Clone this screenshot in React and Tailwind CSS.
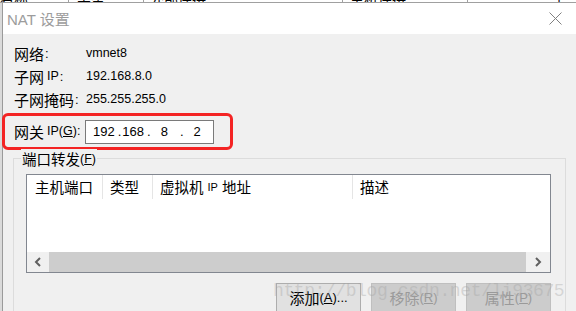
const cjk = "font-['Noto_Sans_CJK_SC',sans-serif]";

function Label({ zh, en }) {
  return (
    <span className="flex items-center">
      <span className={`${cjk} text-[15px] leading-none`}>{zh}</span>
      {en && <span className="text-[12.5px] leading-none ml-[3px]">{en}</span>}
      <span className="text-[13px] leading-none ml-[1px]">:</span>
    </span>
  );
}

function InfoRow({ zh, en, value, h }) {
  return (
    <div className={`flex items-center ${h} pl-[11px]`}>
      <div className="w-[72px]">
        <Label zh={zh} en={en} />
      </div>
      <span className="text-[12.5px] leading-none">{value}</span>
    </div>
  );
}

function Chevron({ dir }) {
  return (
    <svg width="8" height="10" viewBox="0 0 8 10">
      <polyline
        points={dir === "left" ? "6,1 2,5 6,9" : "2,1 6,5 2,9"}
        fill="none"
        stroke="#606060"
        strokeWidth="2"
      />
    </svg>
  );
}

function Button({ zh, hot, dots, disabled }) {
  return (
    <div
      className={`w-[85px] h-[29px] flex items-center justify-center border ${
        disabled ? "bg-[#cccccc] border-[#bfbfbf] text-[#9a9a9a]" : "bg-[#e1e1e1] border-[#adadad] text-black"
      }`}
    >
      <span className={`${cjk} text-[15px] leading-none`}>{zh}</span>
      <span className="text-[13px] leading-none">
        (<span className="underline">{hot}</span>){dots}
      </span>
    </div>
  );
}

export default function App() {
  return (
    <div className="w-[576px] h-[311px] overflow-hidden bg-[#f0f0f0] relative font-['Liberation_Sans','Noto_Sans_CJK_SC',sans-serif] text-black">
      {/* window behind the dialog, only its bottom edge shows */}
      <div className="h-[3px] relative overflow-hidden bg-white border-b border-[#a0a0a0]">
        <span className={`${cjk} absolute left-0 top-[-12px] text-[14px]`}>名称</span>
        <span className={`${cjk} absolute left-[77px] top-[-12px] text-[14px]`}>类型</span>
        <span className={`${cjk} absolute left-[150px] top-[-12px] text-[14px]`}>外部连接</span>
        <span className={`${cjk} absolute left-[350px] top-[-12px] text-[14px]`}>主机连接</span>
        <span className={`${cjk} absolute left-[552px] top-[-12px] text-[14px]`}>子网</span>
        <div className="absolute left-[68px] top-0 h-[3px] w-px bg-[#a0a0a0]" />
        <div className="absolute left-[143px] top-0 h-[3px] w-px bg-[#a0a0a0]" />
        <div className="absolute left-[342px] top-0 h-[3px] w-px bg-[#a0a0a0]" />
        <div className="absolute left-[467px] top-0 h-[3px] w-px bg-[#a0a0a0]" />
      </div>

      <div className="flex h-[308px]">
        <div className="w-[2px] bg-[#dadada]" />
        <div className="flex-1 border-l border-[#9a9a9a] bg-[#f0f0f0] flex flex-col">
          {/* title bar */}
          <div className="h-[31px] shrink-0 bg-white flex items-center justify-between pl-[4px] pr-[14px]">
            <span className="text-[15px] leading-none text-[#9c9c9c]">
              NAT <span className={cjk}>设置</span>
            </span>
            <svg width="13" height="13" viewBox="0 0 13 13">
              <path d="M0.5 0.5 L12.5 12.5 M12.5 0.5 L0.5 12.5" stroke="#808080" strokeWidth="1" fill="none" />
            </svg>
          </div>

          {/* body */}
          <div className="pt-[7px]">
            <InfoRow zh="网络" value="vmnet8" h="h-[24px]" />
            <InfoRow zh="子网" en="IP" value="192.168.8.0" h="h-[23px]" />
            <InfoRow zh="子网掩码" value="255.255.255.0" h="h-[23px]" />

            <div className="mt-[2px] -ml-[1px] w-[231px] h-[37px] border-[3px] border-[#f42424] rounded-[6px] flex items-center pl-[9px]">
              <div className="w-[71px]">
                <span className="flex items-center">
                  <span className={`${cjk} text-[15px] leading-none`}>网关</span>
                  <span className="text-[12.5px] leading-none ml-[3px]">
                    IP(<span className="underline">G</span>):
                  </span>
                </span>
              </div>
              <div className="w-[129px] h-[24px] bg-white border border-[#7a7a7a] flex items-center text-[13px] leading-none">
                <span className="ml-[7px]">192</span>
                <span className="ml-[3px]">.</span>
                <span className="ml-[1px]">168</span>
                <span className="ml-[3px]">.</span>
                <span className="ml-[10px]">8</span>
                <span className="ml-[12px]">.</span>
                <span className="ml-[10px]">2</span>
              </div>
            </div>

            {/* port forwarding group */}
            <div className="mt-[8px] ml-[10px] w-[553px] h-[170px] border border-[#dcdcdc] relative pt-[15px] pl-[12px] pr-[14px]">
              <span className="absolute left-[7px] top-[-10px] h-[20px] px-[1px] bg-[#f0f0f0] flex items-center">
                <span className={`${cjk} text-[14.5px] leading-none`}>端口转发</span>
                <span className="text-[12.5px] leading-none">
                  (<span className="underline">F</span>)
                </span>
              </span>

              <div className="h-[99px] border border-[#828790] bg-white flex flex-col">
                <div className={`${cjk} h-[24px] flex text-[14.5px] leading-none`}>
                  <div className="w-[76px] border-r border-[#e5e5e5] pl-[8px] flex items-center">主机端口</div>
                  <div className="w-[50px] border-r border-[#e5e5e5] pl-[7px] flex items-center">类型</div>
                  <div className="w-[200px] border-r border-[#e5e5e5] pl-[7px] flex items-center">
                    虚拟机<span className="text-[11px] mx-[4px] font-['Liberation_Sans',sans-serif]">IP</span>地址
                  </div>
                  <div className="flex-1 pl-[7px] flex items-center">描述</div>
                </div>
                <div className="flex-1" />
                <div className="h-[20px] flex">
                  <div className="w-[22px] bg-[#f0f0f0] flex items-center justify-center">
                    <Chevron dir="left" />
                  </div>
                  <div className="flex-1 bg-[#cdcdcd]" />
                  <div className="w-[24px] bg-[#f0f0f0] flex items-center justify-center">
                    <Chevron dir="right" />
                  </div>
                </div>
              </div>

              <div className="mt-[10px] flex justify-end gap-[10px]">
                <Button zh="添加" hot="A" dots="..." />
                <Button zh="移除" hot="R" disabled />
                <Button zh="属性" hot="P" disabled />
              </div>
            </div>
          </div>
        </div>
      </div>

      {/* blog watermark over the screenshot */}
      <span className="absolute left-[273px] top-[281px] font-['Liberation_Mono',monospace] text-[18px] leading-[20px] tracking-[-0.4px] text-[#a0a0a0]/35 pointer-events-none">
        http://blog.csdn.net/li93675
      </span>
    </div>
  );
}
